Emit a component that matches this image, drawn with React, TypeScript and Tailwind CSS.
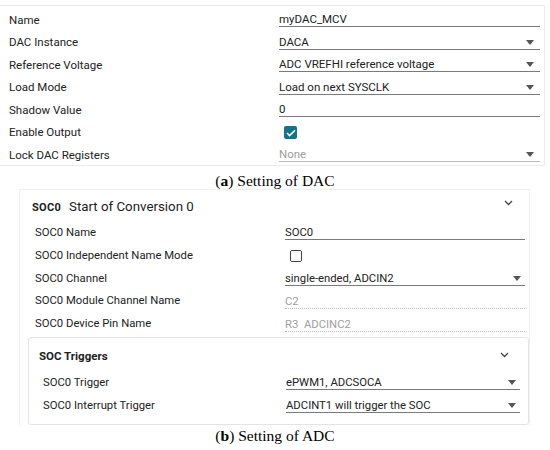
import React from 'react';

type Row = { label: string; value?: string; kind: 'text' | 'select' | 'check' | 'uncheck' | 'disabled' | 'disabledSelect' };

const dacRows: Row[] = [
  { label: 'Name', value: 'myDAC_MCV', kind: 'text' },
  { label: 'DAC Instance', value: 'DACA', kind: 'select' },
  { label: 'Reference Voltage', value: 'ADC VREFHI reference voltage', kind: 'select' },
  { label: 'Load Mode', value: 'Load on next SYSCLK', kind: 'select' },
  { label: 'Shadow Value', value: '0', kind: 'text' },
  { label: 'Enable Output', kind: 'check' },
  { label: 'Lock DAC Registers', value: 'None', kind: 'disabledSelect' },
];

const socRows: Row[] = [
  { label: 'SOC0 Name', value: 'SOC0', kind: 'text' },
  { label: 'SOC0 Independent Name Mode', kind: 'uncheck' },
  { label: 'SOC0 Channel', value: 'single-ended, ADCIN2', kind: 'select' },
  { label: 'SOC0 Module Channel Name', value: 'C2', kind: 'disabled' },
  { label: 'SOC0 Device Pin Name', value: 'R3  ADCINC2', kind: 'disabled' },
];

const trigRows: Row[] = [
  { label: 'SOC0 Trigger', value: 'ePWM1, ADCSOCA', kind: 'select' },
  { label: 'SOC0 Interrupt Trigger', value: 'ADCINT1 will trigger the SOC', kind: 'select' },
];

function Caret() {
  return (
    <svg width="8" height="5" viewBox="0 0 8 5" className="shrink-0">
      <path d="M0 0h8L4 5z" fill="#555" />
    </svg>
  );
}

function Chevron() {
  return (
    <svg width="9" height="6" viewBox="0 0 9 6">
      <path d="M1 1l3.5 3.5L8 1" fill="none" stroke="#444" strokeWidth="1.3" />
    </svg>
  );
}

function Value({ row, arrowPad }: { row: Row; arrowPad: string }) {
  if (row.kind === 'check') {
    return (
      <div className="pl-[5px]">
        <div className="w-[13px] h-[13px] bg-[#17718a] rounded-[2px] flex items-center justify-center">
          <svg width="10" height="8" viewBox="0 0 10 8">
            <path d="M1 4l2.6 2.6L9 1.2" fill="none" stroke="#fff" strokeWidth="1.6" />
          </svg>
        </div>
      </div>
    );
  }
  if (row.kind === 'uncheck') {
    return (
      <div className="pl-[5px]">
        <div className="w-[12px] h-[12px] border-[1.5px] border-[#444] rounded-[2px]" />
      </div>
    );
  }
  const disabled = row.kind === 'disabled' || row.kind === 'disabledSelect';
  const select = row.kind === 'select' || row.kind === 'disabledSelect';
  return (
    <div
      className={`flex items-center justify-between h-[14px] leading-[13px] border-b ${
        disabled ? 'border-[#bbb] text-[#a0a0a0]' : 'border-[#7a7a7a] text-[#222]'
      } ${row.kind === 'disabled' ? 'border-dotted' : ''}`}
    >
      <span className="whitespace-pre">{row.value}</span>
      {select && <span className={arrowPad}><Caret /></span>}
    </div>
  );
}

export default function App() {
  return (
    <div
      className="w-[550px] h-[450px] bg-white relative overflow-hidden text-[#222]"
      style={{ fontFamily: 'Roboto, "Liberation Sans", sans-serif' }}
    >
      {/* DAC panel */}
      <div className="mt-[5px] w-[545px] h-[161px] border-t border-r border-b border-[#ececec] pt-[3px] text-[11.5px]">
        {dacRows.map((r) => (
          <div key={r.label} className="flex items-center h-[22.5px]">
            <div className="w-[279px] pl-[9px]">{r.label}</div>
            <div className="w-[261px]">
              <Value row={r} arrowPad="pr-[6px]" />
            </div>
          </div>
        ))}
      </div>

      <div
        className="text-center text-[15.5px] mt-[6px] leading-[17px] text-black"
        style={{ fontFamily: '"Liberation Serif", serif' }}
      >
        (<b>a</b>) Setting of DAC
      </div>

      {/* ADC panel */}
      <div className="ml-[19px] mt-[0px] w-[511px] border-t border-l border-r border-[#f0f0f0] text-[11.3px]">
        <div className="flex items-center justify-between h-[32px] pl-[12px] pr-[16px] pt-[2px]">
          <div className="flex items-baseline">
            <span className="font-bold text-[11px] tracking-[0.3px] w-[37px]">SOC0</span>
            <span className="text-[13.3px]">Start of Conversion 0</span>
          </div>
          <div className="-mt-[8px]"><Chevron /></div>
        </div>
        <div>
          {socRows.map((r) => (
            <div key={r.label} className="flex items-center h-[22.8px]">
              <div className="w-[265px] pl-[15px]">{r.label}</div>
              <div className="w-[240px]">
                <Value row={r} arrowPad="pr-[4px]" />
              </div>
            </div>
          ))}
        </div>

        <div className="ml-[8px] mt-[1px] w-[501px] h-[88px] border border-[#e4e4e4] rounded-[3px]">
          <div className="flex items-center justify-between h-[34px] pl-[10px] pr-[19px]">
            <span className="font-bold text-[11.5px] mt-[3px]">SOC Triggers</span>
            <Chevron />
          </div>
          {trigRows.map((r) => (
            <div key={r.label} className="flex items-center h-[23px]">
              <div className="w-[257px] pl-[14px]">{r.label}</div>
              <div className="w-[234px]">
                <Value row={r} arrowPad="pr-[4px]" />
              </div>
            </div>
          ))}
        </div>
      </div>

      <div
        className="text-center text-[15.5px] mt-[2px] leading-[17px] text-black"
        style={{ fontFamily: '"Liberation Serif", serif' }}
      >
        (<b>b</b>) Setting of ADC
      </div>
    </div>
  );
}
